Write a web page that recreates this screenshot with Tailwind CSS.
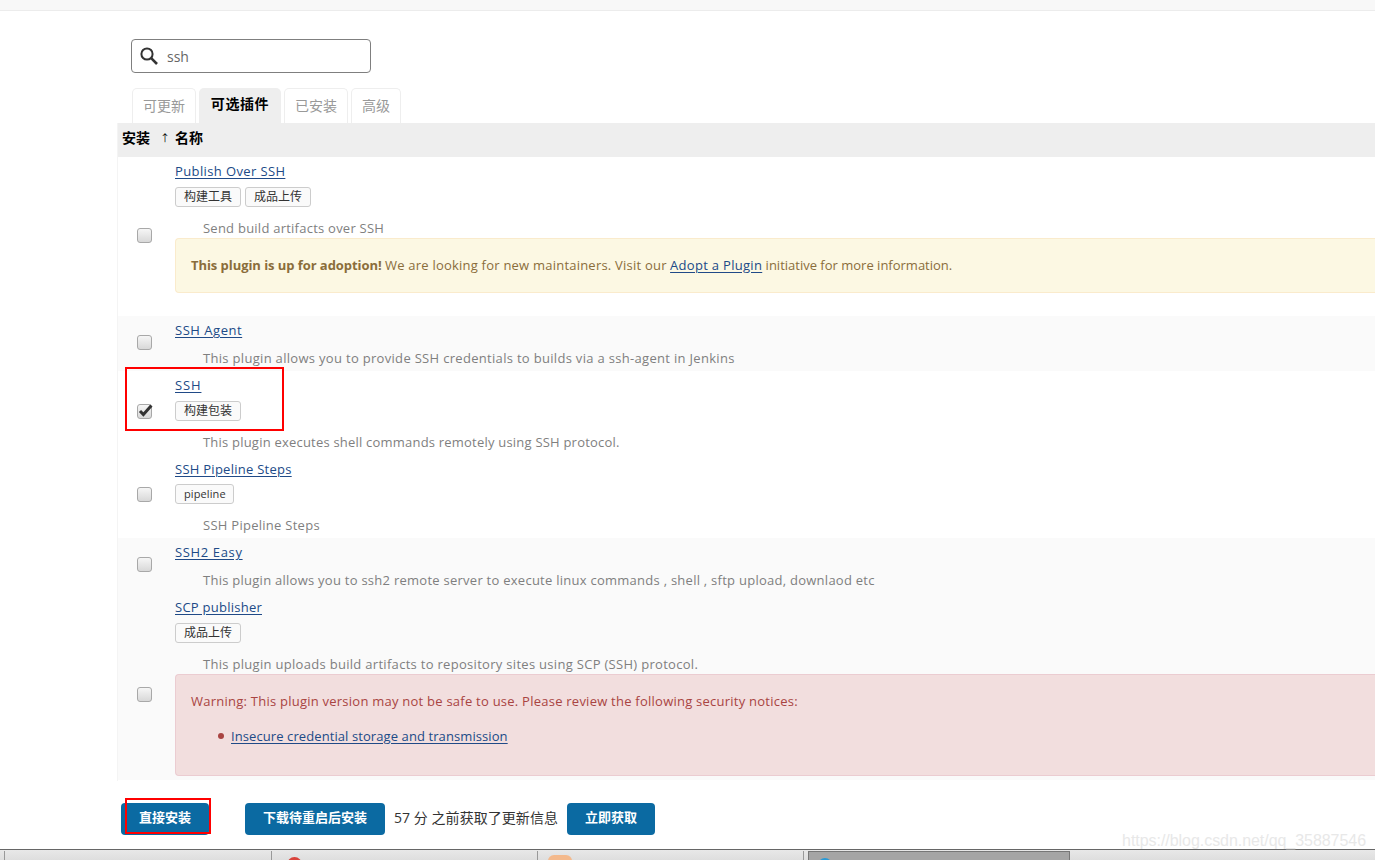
<!DOCTYPE html>
<html lang="en">
<head>
  <meta charset="UTF-8">
  <title>Jenkins plugin manager</title>
  <script src="https://cdn.jsdelivr.net/npm/@tailwindcss/browser@4"></script>
</head>
<body class="relative h-[860px] w-[1375px] overflow-hidden bg-white text-[13px] leading-[18px] font-['Open_Sans','Noto_Sans_CJK_SC',sans-serif] text-[#333]">
  <div class="h-[11px] border-b border-[#ececec] bg-[#f8f8f8]"></div>

  <main class="h-[838px] pl-[117px] pt-[28px]">
    <!-- search -->
    <div class="ml-[14px] flex h-[34px] w-[240px] items-center rounded-[4px] border border-[#7f7f7f] pl-[7px]">
      <svg class="h-[20px] w-[20px]" viewBox="0 0 20 20" fill="none" stroke="#333" stroke-width="2"><circle cx="8" cy="8" r="5.6"/><path d="M12.2 12.2L18 18" stroke-width="2.6"/></svg>
      <span class="ml-[8px] pt-[2px] text-[14px] text-[#666]">ssh</span>
    </div>

    <!-- tabs -->
    <div class="ml-[15px] mt-[15px] flex h-[35px] gap-[3px] text-[14px]">
      <div class="flex w-[64px] items-center justify-center rounded-t-[5px] border border-b-0 border-[#eee] pb-[1px] text-[#999]">可更新</div>
      <div class="flex w-[82px] items-center justify-center rounded-t-[5px] bg-[#eee] pb-[4px] font-bold tracking-[0.6px] text-black">可选插件</div>
      <div class="flex w-[64px] items-center justify-center rounded-t-[5px] border border-b-0 border-[#eee] pb-[1px] text-[#999]">已安装</div>
      <div class="flex w-[50px] items-center justify-center rounded-t-[5px] border border-b-0 border-[#eee] pb-[1px] text-[#999]">高级</div>
    </div>

    <!-- plugin table -->
    <div class="h-[658px] border-l border-[#f4f4f4]">
      <div class="flex h-[34px] items-center bg-[#eee] pb-[4px] pl-[4px] text-[14px] font-bold text-black">
        <span class="w-[38px]">安装</span><span class="w-[15px] text-[10px] font-normal">↑</span><span>名称</span>
      </div>

      <div class="flex h-[159px]">
        <div class="w-[57px] pl-[19px] pt-[71px]"><div class="h-[15px] w-[15px] rounded-[3px] border border-[#a8a8a8] bg-gradient-to-b from-[#f6f6f6] to-[#d8d8d8]"></div></div>
        <div class="flex-1 pt-[5px]">
          <a class="tracking-[0.38px] text-[#204a87] underline underline-offset-2" href="#">Publish Over SSH</a>
          <div class="mt-[7px] flex gap-[4px]">
            <span class="rounded-[3px] border border-[#ccc] bg-[#fafafa] px-[8px] text-[12px]">构建工具</span>
            <span class="rounded-[3px] border border-[#ccc] bg-[#fafafa] px-[8px] text-[12px]">成品上传</span>
          </div>
          <p class="ml-[28px] mt-[12px] tracking-[0.24px] text-[#7f7f7f]">Send build artifacts over SSH</p>
          <div class="mt-[1px] flex h-[55px] items-center rounded-l-[4px] border border-r-0 border-[#faebcc] bg-[#fcf8e3] pb-[2px] pl-[15px] text-[#8a6d3b]">
            <span><b class="tracking-[-0.06px]">This plugin is up for adoption!</b> <span class="tracking-[0.22px]">We are looking for new maintainers. Visit our</span> <a class="tracking-[0.3px] text-[#204a87] underline underline-offset-2" href="#">Adopt a Plugin</a> initiative for more information.</span>
          </div>
        </div>
      </div>

      <div class="flex h-[55px] bg-[#fafafa]">
        <div class="w-[57px] pl-[19px] pt-[19px]"><div class="h-[15px] w-[15px] rounded-[3px] border border-[#a8a8a8] bg-gradient-to-b from-[#f6f6f6] to-[#d8d8d8]"></div></div>
        <div class="flex-1 pt-[5px]">
          <a class="tracking-[0.53px] text-[#204a87] underline underline-offset-2" href="#">SSH Agent</a>
          <p class="ml-[28px] mt-[10px] tracking-[0.31px] text-[#7f7f7f]">This plugin allows you to provide SSH credentials to builds via a ssh-agent in Jenkins</p>
        </div>
      </div>

      <div class="flex h-[84px]">
        <div class="w-[57px] pl-[19px] pt-[33px]">
          <div class="h-[15px] w-[15px] rounded-[3px] border border-[#a8a8a8] bg-gradient-to-b from-[#f6f6f6] to-[#d8d8d8]">
            <svg class="h-[13px] w-[13px] overflow-visible" viewBox="0 0 13 13" fill="none" stroke="#333" stroke-width="3"><path d="M2 6L5.4 9.6L13.4 0.6"/></svg>
          </div>
        </div>
        <div class="flex-1 pt-[5px]">
          <a class="tracking-[0.87px] text-[#204a87] underline underline-offset-2" href="#">SSH</a>
          <div class="mt-[7px] flex gap-[4px]">
            <span class="rounded-[3px] border border-[#ccc] bg-[#fafafa] px-[8px] text-[12px]">构建包装</span>
          </div>
          <p class="ml-[28px] mt-[12px] tracking-[0.21px] text-[#7f7f7f]">This plugin executes shell commands remotely using SSH protocol.</p>
        </div>
      </div>

      <div class="flex h-[83px]">
        <div class="w-[57px] pl-[19px] pt-[32px]"><div class="h-[15px] w-[15px] rounded-[3px] border border-[#a8a8a8] bg-gradient-to-b from-[#f6f6f6] to-[#d8d8d8]"></div></div>
        <div class="flex-1 pt-[5px]">
          <a class="tracking-[0.26px] text-[#204a87] underline underline-offset-2" href="#">SSH Pipeline Steps</a>
          <div class="mt-[6px] flex gap-[4px]">
            <span class="rounded-[3px] border border-[#ccc] bg-[#fafafa] pl-[8px] pr-[7px] text-[11px] tracking-[0.1px]">pipeline</span>
          </div>
          <p class="ml-[28px] mt-[12px] tracking-[0.27px] text-[#7f7f7f]">SSH Pipeline Steps</p>
        </div>
      </div>

      <div class="flex h-[55px] bg-[#fafafa]">
        <div class="w-[57px] pl-[19px] pt-[19px]"><div class="h-[15px] w-[15px] rounded-[3px] border border-[#a8a8a8] bg-gradient-to-b from-[#f6f6f6] to-[#d8d8d8]"></div></div>
        <div class="flex-1 pt-[5px]">
          <a class="tracking-[0.64px] text-[#204a87] underline underline-offset-2" href="#">SSH2 Easy</a>
          <p class="ml-[28px] mt-[10px] tracking-[0.26px] text-[#7f7f7f]">This plugin allows you to ssh2 remote server to execute linux commands , shell , sftp upload, downlaod etc</p>
        </div>
      </div>

      <div class="flex h-[187px] bg-[#fafafa]">
        <div class="w-[57px] pl-[19px] pt-[94px]"><div class="h-[15px] w-[15px] rounded-[3px] border border-[#a8a8a8] bg-gradient-to-b from-[#f6f6f6] to-[#d8d8d8]"></div></div>
        <div class="flex-1 pt-[5px]">
          <a class="tracking-[0.25px] text-[#204a87] underline underline-offset-2" href="#">SCP publisher</a>
          <div class="mt-[7px] flex gap-[4px]">
            <span class="rounded-[3px] border border-[#ccc] bg-[#fafafa] px-[8px] text-[12px]">成品上传</span>
          </div>
          <p class="ml-[28px] mt-[12px] tracking-[0.3px] text-[#7f7f7f]">This plugin uploads build artifacts to repository sites using SCP (SSH) protocol.</p>
          <div class="mt-[1px] h-[102px] rounded-l-[4px] border border-r-0 border-[#ebccd1] bg-[#f2dede] pl-[15px] pt-[17px] text-[#a94442]">
            <p class="tracking-[0.24px]">Warning: This plugin version may not be safe to use. Please review the following security notices:</p>
            <ul class="ml-[27px] mt-[17px]">
              <li class="flex items-center gap-[7px]">
                <span class="h-[6px] w-[6px] rounded-full bg-[#a94442]"></span>
                <a class="tracking-[0.09px] text-[#204a87] underline underline-offset-2" href="#">Insecure credential storage and transmission</a>
              </li>
            </ul>
          </div>
        </div>
      </div>
    </div>

    <!-- actions -->
    <div class="ml-[4px] mt-[22px] flex items-center text-[14px]">
      <button class="h-[32px] w-[88px] rounded-[4px] bg-[#0b6aa2] pb-[4px] text-[13px] font-bold text-white">直接安装</button>
      <button class="ml-[36px] h-[32px] w-[140px] rounded-[4px] bg-[#0b6aa2] pb-[4px] text-[13px] font-bold text-white">下载待重启后安装</button>
      <span class="ml-[9px] w-[173px] pb-[2px] tracking-[0.05px]">57 分 之前获取了更新信息</span>
      <button class="h-[32px] w-[88px] rounded-[4px] bg-[#0b6aa2] pb-[4px] text-[13px] font-bold text-white">立即获取</button>
    </div>
  </main>

  <!-- taskbar -->
  <div class="flex h-[11px] overflow-hidden border-t border-[#666] bg-gradient-to-b from-[#e8e8e8] to-[#dedede] pl-[4px] pt-[1px]">
    <div class="w-[267px] border-l border-[#999]"></div>
    <div class="w-[266px] border-l border-[#999] pl-[15px] pt-[6px]"><div class="h-[15px] w-[15px] rounded-full bg-[#d9433b]"></div></div>
    <div class="w-[266px] border-l border-[#999] pl-[10px] pt-[4px]"><div class="h-[24px] w-[24px] rounded-[6px] bg-[#f4b98c]"></div></div>
    <div class="flex w-[267px] border-l border-[#999] pl-[4px]">
      <div class="h-[20px] w-[262px] border border-[#777] bg-[#a5a5a5] pl-[9px] pt-[6px]"><div class="h-[14px] w-[14px] rounded-full bg-[#2a9ad6]"></div></div>
    </div>
  </div>

  <!-- annotations -->
  <div class="absolute left-[125px] top-[367px] h-[64px] w-[159px] border-2 border-[#f00]"></div>
  <div class="absolute left-[125px] top-[798px] h-[36px] w-[86px] border-2 border-[#f00]"></div>
  <div class="absolute right-[9px] top-[832px] text-[16px] tracking-[-0.05px] font-['Liberation_Sans'] text-[#e8e8e8]">https://blog.csdn.net/qq_35887546</div>
</body>
</html>
